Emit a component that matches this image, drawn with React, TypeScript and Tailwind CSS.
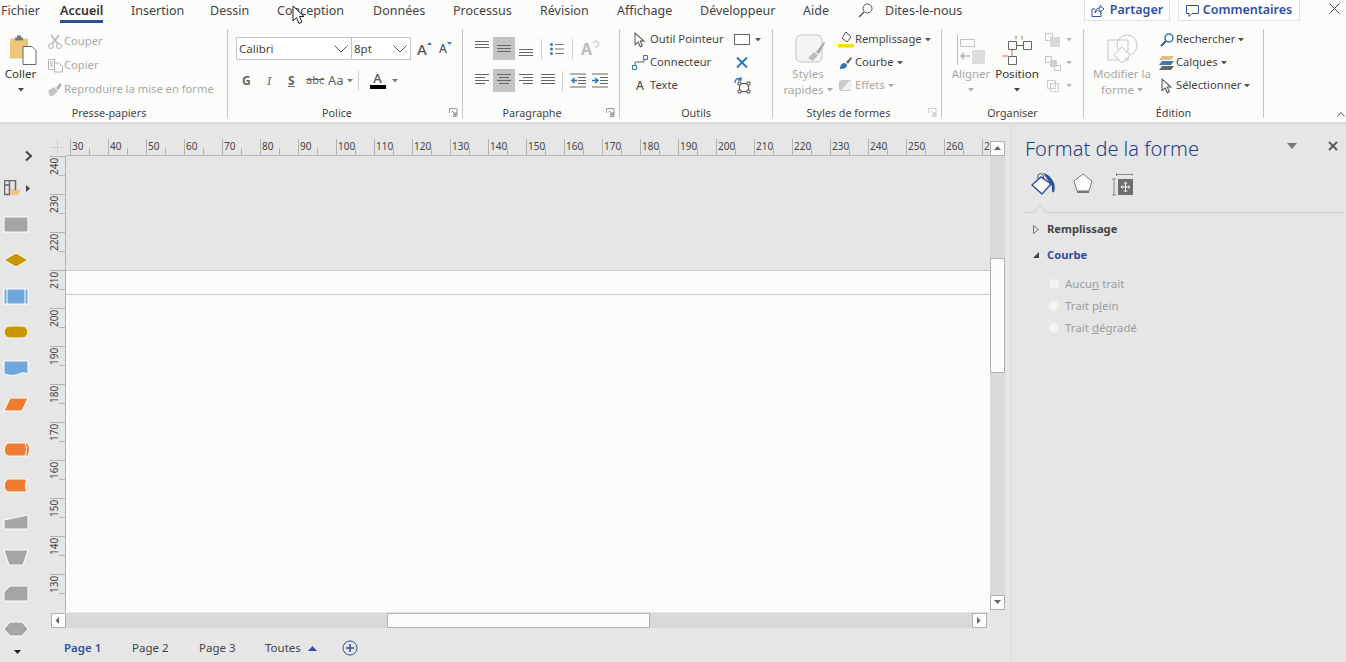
import type { ReactNode } from "react";

const font = { fontFamily: '"Noto Sans", "Open Sans", sans-serif' };

const tabs = [
  { name: "Fichier", w: "w-[59px]" },
  { name: "Accueil", w: "w-[71px]", active: true },
  { name: "Insertion", w: "w-[79px]" },
  { name: "Dessin", w: "w-[67px]" },
  { name: "Conception", w: "w-[96px]" },
  { name: "Données", w: "w-[80px]" },
  { name: "Processus", w: "w-[87px]" },
  { name: "Révision", w: "w-[77px]" },
  { name: "Affichage", w: "w-[83px]" },
  { name: "Développeur", w: "w-[103px]" },
  { name: "Aide", w: "w-[56px]" },
];

const hLabels = Array.from({ length: 25 }, (_, i) => 30 + i * 10);
const vLabels = Array.from({ length: 12 }, (_, i) => 240 - i * 10);

function Caret({ color = "#555" }: { color?: string }) {
  return (
    <svg width="6" height="3.500" viewBox="0 0 7 4" className="shrink-0">
      <path d="M0 0h7L3.500 4z" fill={color} />
    </svg>
  );
}

function Launcher({ off }: { off?: boolean }) {
  return (
    <svg width="9" height="9" viewBox="0 0 9 9" className="absolute bottom-[1px] right-[4px]">
      <path d="M.5 5V.5H8M8 .5V8.5H4" fill="none" stroke={off ? "#cfcfcf" : "#9a9a9a"} />
      <path d="M3 3l4 4M7 4v3H4" fill="none" stroke={off ? "#c4c4c4" : "#777"} />
    </svg>
  );
}

function Group({
  w,
  label,
  labelPad = "",
  launcher,
  launcherOff,
  children,
}: {
  w: string;
  label: string;
  labelPad?: string;
  launcher?: boolean;
  launcherOff?: boolean;
  children: ReactNode;
}) {
  return (
    <section className={`relative flex h-[89px] shrink-0 flex-col border-r border-[#c6c6c6] ${w}`}>
      <div className="flex h-[77px] shrink-0 items-start">{children}</div>
      <div className={`shrink-0 text-center text-[10.8px] leading-[13px] text-[#444] ${labelPad}`}>{label}</div>
      {launcher && <Launcher off={launcherOff} />}
    </section>
  );
}

function Row({
  icon,
  label,
  off,
  caret,
  h = "h-[23px]",
  iconW = "w-[18px]",
}: {
  icon: ReactNode;
  label: string;
  off?: boolean;
  caret?: boolean;
  h?: string;
  iconW?: string;
}) {
  return (
    <div className={`flex items-center whitespace-nowrap text-[11.2px] ${h} ${off ? "text-[#a8a8a8]" : "text-[#444]"}`}>
      <span className={`flex shrink-0 items-center justify-center ${iconW}`}>{icon}</span>
      <span>{label}</span>
      {caret && (
        <span className="ml-[3px]">
          <Caret color={off ? "#aaa" : "#555"} />
        </span>
      )}
    </div>
  );
}

function Big({
  icon,
  lines,
  off,
  w,
  caretInline,
}: {
  icon: ReactNode;
  lines: string[];
  off?: boolean;
  w: string;
  caretInline?: boolean;
}) {
  const tone = off ? "text-[#a8a8a8]" : "text-[#333]";
  return (
    <div className={`flex shrink-0 flex-col items-center pt-[4px] text-[11.5px] leading-[16px] ${w} ${tone}`}>
      <div className="flex h-[33px] items-center justify-center">{icon}</div>
      {lines.map((line, i) => (
        <div key={line} className="flex items-center gap-[3px] whitespace-nowrap">
          {line}
          {caretInline && i === lines.length - 1 && <Caret color="#aaa" />}
        </div>
      ))}
      {!caretInline && (
        <div className="flex h-[16px] items-center">
          <Caret color={off ? "#aaa" : "#444"} />
        </div>
      )}
    </div>
  );
}

function Lines({ kind, on }: { kind: string; on?: boolean }) {
  const rows: Record<string, string> = {
    top: "M0 1.5h14M0 4.5h14M0 7.5h14",
    mid: "M0 5.5h14M0 8.5h14M0 11.5h14",
    bot: "M0 9.5h14M0 12.5h14M0 15.5h14",
    left: "M0 2.5h14M0 5.5h10M0 8.5h14M0 11.5h10",
    center: "M0 2.5h14M2 5.5h10M0 8.5h14M2 11.5h10",
    right: "M0 2.5h14M4 5.5h10M0 8.5h14M4 11.5h10",
    just: "M0 2.5h14M0 5.5h14M0 8.5h14M0 11.5h14",
  };
  return (
    <span className={`flex h-[23px] w-[22px] items-center justify-center ${on ? "bg-[#c4c4c4]" : ""}`}>
      <svg width="14" height="17" viewBox="0 0 14 17">
        <path d={rows[kind]} stroke="#666" fill="none" />
      </svg>
    </span>
  );
}

function Sep({ h = "h-[20px]" }: { h?: string }) {
  return <span className={`block w-px shrink-0 bg-[#d0d0d0] ${h}`} />;
}

function Pointer({ size = 16 }: { size?: number }) {
  return (
    <svg width={size * 0.72} height={size} viewBox="0 0 11 15">
      <path d="M1 1v11l3-2.5 2 4.5 2-1-2-4.500h3.500z" fill="#fcfcfa" stroke="#555" />
    </svg>
  );
}

function Stencil({ children, className = "" }: { children: ReactNode; className?: string }) {
  return (
    <svg width="26" height="18" viewBox="0 0 26 18" className={`ml-[3px] shrink-0 ${className}`}>
      {children}
    </svg>
  );
}

function ScrollBtn({ d }: { d: string }) {
  return (
    <div className="flex h-[15px] w-[15px] shrink-0 items-center justify-center border border-[#b0b0b0] bg-[#fcfcfa]">
      <svg width="9" height="9" viewBox="0 0 9 9">
        <path d={d} fill="#666" />
      </svg>
    </div>
  );
}

export default function App() {
  return (
    <div className="relative h-[662px] w-[1346px] overflow-hidden bg-[#e6e6e6]" style={font}>
      {/* ribbon */}
      <header className="h-[125px] border-b-[3px] border-[#dcdcdc] bg-[#fcfcfa]">
        <nav className="flex h-[29px] items-start pl-[1px] text-[12.5px] text-[#444]">
          {tabs.map((tab) => (
            <div key={tab.name} className={`shrink-0 ${tab.w}`}>
              <span
                className={`inline-block h-[23px] pt-[2px] leading-[18px] ${
                  tab.active ? "border-b-[3px] border-[#2b4ea0] font-semibold text-[#333]" : ""
                }`}
              >
                {tab.name}
              </span>
            </div>
          ))}
          <div className="ml-[-1px] flex items-center pt-[3px]">
            <svg width="15" height="15" viewBox="0 0 15 15" className="mr-[12px]">
              <circle cx="9.500" cy="5.500" r="4.500" fill="none" stroke="#555" />
              <path d="M6 9l-5 5" stroke="#555" strokeWidth="1.400" />
            </svg>
            <span className="leading-[14px]">Dites-le-nous</span>
          </div>
          <div className="ml-auto flex items-start">
            <button className="flex h-[21px] w-[86px] items-center justify-center gap-[5px] border border-t-0 border-[#e2e2e2] bg-white pt-[1px] text-[12.5px] font-semibold text-[#2f4f9f]">
              <svg width="14" height="14" viewBox="0 0 14 14">
                <path d="M10 7v5.500H1V5h3" fill="none" stroke="#2f4f9f" />
                <path d="M4 9c0-3 2-5 5-5V1.500l4 3.500-4 3.500V6C7 6 5 7 4 9z" fill="none" stroke="#2f4f9f" />
              </svg>
              Partager
            </button>
            <button className="ml-[8px] flex h-[21px] w-[122px] items-center justify-center gap-[4px] border border-t-0 border-[#e2e2e2] bg-white pt-[1px] text-[12.5px] font-semibold text-[#2f4f9f]">
              <svg width="13" height="12" viewBox="0 0 13 12">
                <path d="M.5.500h12v8H6l-3 3v-3H.5z" fill="none" stroke="#2f4f9f" />
              </svg>
              Commentaires
            </button>
            <svg width="11" height="11" viewBox="0 0 11 11" className="ml-[29px] mr-[6px] mt-[3px]">
              <path d="M.5.500l10 10M10.500.5l-10 10" stroke="#444" />
            </svg>
          </div>
        </nav>

        <div className="flex">
          <Group w="w-[228px]" label="Presse-papiers" labelPad="pr-[9px]">
            <div className="flex w-[41px] shrink-0 flex-col items-center pt-[4px] text-[11.5px] leading-[16px] text-[#333]">
              <svg width="29" height="33" viewBox="0 0 29 30" className="ml-[5px]">
                <path d="M1 4h18v20H1z" fill="#eec67a" />
                <path d="M6 3h8v3H6z" fill="#777" />
                <path d="M8 1h4v3H8z" fill="#777" />
                <path d="M14 12h9l4 4v14H14z" fill="#fff" stroke="#666" />
              </svg>
              <span>Coller</span>
              <span className="flex h-[16px] items-center">
                <Caret color="#444" />
              </span>
            </div>
            <div className="ml-[5px] flex flex-col">
              <Row
                h="h-[24px]"
                off
                label="Couper"
                icon={
                  <svg width="15" height="15" viewBox="0 0 15 15">
                    <circle cx="3" cy="12" r="2.500" fill="none" stroke="#b5b5b5" />
                    <circle cx="11" cy="12" r="2.500" fill="none" stroke="#b5b5b5" />
                    <path d="M4 10L11 1M10 10L3 1" stroke="#b5b5b5" strokeWidth="1.500" />
                  </svg>
                }
              />
              <Row
                h="h-[24px]"
                off
                label="Copier"
                icon={
                  <svg width="15" height="15" viewBox="0 0 15 15">
                    <path d="M.5 1.500h6v10h-6zM6.500 5h4l4 3v6h-8z" fill="#fcfcfa" stroke="#b5b5b5" />
                    <path d="M2 4h3M2 6h3M2 8h3" stroke="#b5b5b5" />
                  </svg>
                }
              />
              <Row
                h="h-[24px]"
                off
                label="Reproduire la mise en forme"
                icon={
                  <svg width="16" height="15" viewBox="0 0 16 15">
                    <path d="M1 9l6-4 4 4-5 5H3z" fill="#c4c4c4" />
                    <path d="M9 6l4-5 2 2-4 5z" fill="#b0b0b0" />
                  </svg>
                }
              />
            </div>
          </Group>

          <Group w="w-[235px]" label="Police" labelPad="pr-[16px]" launcher>
            <div className="ml-[8px] flex flex-col">
              <div className="mt-[8px] flex h-[23px] items-center">
                <div className="flex h-[23px] w-[116px] items-center justify-between border border-[#c4c4c4] bg-white pl-[2px] pr-[3px] text-[11.500px] text-[#444]">
                  Calibri
                  <svg width="14" height="8" viewBox="0 0 14 8">
                    <path d="M.5.500L7 7l6.500-6.500" fill="none" stroke="#555" />
                  </svg>
                </div>
                <div className="ml-[-1px] flex h-[23px] w-[60px] items-center justify-between border border-[#c4c4c4] bg-white pl-[2px] pr-[3px] text-[11.500px] text-[#444]">
                  8pt
                  <svg width="14" height="8" viewBox="0 0 14 8">
                    <path d="M.5.500L7 7l6.500-6.500" fill="none" stroke="#555" />
                  </svg>
                </div>
                <span className="ml-[6px] flex w-[21px] items-start text-[15px] font-medium leading-[16px] text-[#555]">
                  A
                  <svg width="5" height="3" viewBox="0 0 5 3" className="mt-[1px]">
                    <path d="M0 3h5L2.500 0z" fill="#4a7ab5" />
                  </svg>
                </span>
                <span className="ml-[1px] flex items-start text-[12px] font-medium leading-[16px] text-[#555]">
                  A
                  <svg width="5" height="3" viewBox="0 0 5 3" className="mt-[1px]">
                    <path d="M0 0h5L2.500 3z" fill="#4a7ab5" />
                  </svg>
                </span>
              </div>
              <div className="mt-[9px] flex h-[23px] items-center text-[#666]">
                <span className="w-[23px] pl-[6px] text-[12px] font-bold">G</span>
                <span className="w-[22px] pl-[8px] font-serif text-[13px] italic">I</span>
                <span className="w-[22px] pl-[7px] text-[12px] font-bold underline">S</span>
                <span className="w-[23px] pl-[3px] text-[11px] line-through">abc</span>
                <span className="flex w-[32px] items-center gap-[3px] pl-[2px] text-[13px]">
                  Aa
                  <Caret color="#777" />
                </span>
                <Sep />
                <span className="ml-[7px] flex w-[23px] flex-col items-center text-[13px] font-medium leading-[13px] text-[#555]">
                  A
                  <span className="h-[4px] w-[16px] bg-black" />
                </span>
                <span className="ml-[3px]">
                  <Caret color="#777" />
                </span>
              </div>
            </div>
          </Group>

          <Group w="w-[157px]" label="Paragraphe" labelPad="pr-[18px]" launcher>
            <div className="ml-[8px] flex flex-col">
              <div className="mt-[8px] flex h-[23px] items-center">
                <Lines kind="top" />
                <Lines kind="mid" on />
                <Lines kind="bot" />
                <span className="ml-[4px]">
                  <Sep />
                </span>
                <svg width="14" height="14" viewBox="0 0 14 14" className="ml-[8px]">
                  <path d="M5 2.500h9M5 7h9M5 11.500h9" stroke="#777" />
                  <circle cx="1.500" cy="2.500" r="1.500" fill="#3f73b0" />
                  <circle cx="1.500" cy="7" r="1.500" fill="#3f73b0" />
                  <circle cx="1.500" cy="11.500" r="1.500" fill="#3f73b0" />
                </svg>
                <span className="ml-[8px]">
                  <Sep />
                </span>
                <span className="ml-[8px] flex items-start text-[16px] font-bold leading-[18px] text-[#bcbcbc]">
                  A
                  <svg width="7" height="8" viewBox="0 0 7 8">
                    <path d="M1 3a3 3 0 1 1 2 4" fill="none" stroke="#bcbcbc" />
                  </svg>
                </span>
              </div>
              <div className="mt-[9px] flex h-[23px] items-center">
                <Lines kind="left" />
                <Lines kind="center" on />
                <Lines kind="right" />
                <Lines kind="just" />
                <span className="ml-[3px]">
                  <Sep />
                </span>
                <svg width="16" height="15" viewBox="0 0 16 15" className="ml-[7px]">
                  <path d="M0 1h16M8 4.500h8M8 7.500h8M8 10.500h8M0 14h16" stroke="#666" />
                  <path d="M7 7.500H2M4.500 5L2 7.500 4.500 10" fill="none" stroke="#2e74b5" strokeWidth="1.500" />
                </svg>
                <svg width="16" height="15" viewBox="0 0 16 15" className="ml-[6px]">
                  <path d="M0 1h16M8 4.500h8M8 7.500h8M8 10.500h8M0 14h16" stroke="#666" />
                  <path d="M0 7.500h5M3 5l3 2.500L3 10" fill="none" stroke="#2e74b5" strokeWidth="1.500" />
                </svg>
              </div>
            </div>
          </Group>

          <Group w="w-[153px]" label="Outils">
            <div className="ml-[10px] mt-[-1px] flex w-[104px] shrink-0 flex-col">
              <Row iconW="w-[20px]" label="Outil Pointeur" icon={<Pointer />} />
              <Row
                iconW="w-[20px]"
                label="Connecteur"
                icon={
                  <svg width="16" height="15" viewBox="0 0 16 15">
                    <path d="M3 10V7h9V4" fill="none" stroke="#666" />
                    <path d="M.5 10.500h4v4h-4zM11.500.5h4v4h-4z" fill="#fff" stroke="#2e74b5" />
                  </svg>
                }
              />
              <Row
                iconW="w-[20px]"
                label="Texte"
                icon={<span className="text-[12px] font-medium text-[#555]">A</span>}
              />
            </div>
            <div className="mt-[-1px] flex flex-col">
              <div className="flex h-[23px] items-center gap-[5px]">
                <span className="h-[11px] w-[16px] border border-[#666] bg-white" />
                <Caret />
              </div>
              <div className="flex h-[23px] items-center pl-[2px]">
                <svg width="12" height="11" viewBox="0 0 12 11">
                  <path d="M1 .5l10 10M11 .5l-10 10" stroke="#2e74b5" strokeWidth="2" />
                </svg>
              </div>
              <div className="flex h-[23px] items-center">
                <svg width="17" height="17" viewBox="0 0 17 17">
                  <path d="M5.500 6.500h9v8h-9z" fill="none" stroke="#555" />
                  <path d="M4 5h3v3H4zM13 5h3v3h-3zM4 13h3v3H4zM13 13h3v3h-3z" fill="#fcfcfa" stroke="#555" />
                  <path d="M1 6a4 4 0 0 1 6-4M7 0v3H4" fill="none" stroke="#2e74b5" strokeWidth="1.300" />
                </svg>
              </div>
            </div>
          </Group>

          <Group w="w-[169px]" label="Styles de formes" labelPad="pr-[17px]" launcher launcherOff>
            <div className="ml-[13px]">
              <Big
                off
                caretInline
                w="w-[44px]"
                lines={["Styles", "rapides"]}
                icon={
                  <svg width="31" height="31" viewBox="0 0 31 31" className="ml-[5px]">
                    <rect x="1" y="1" width="26" height="27" rx="5" fill="#f4f4f4" stroke="#c4c4c4" />
                    <path d="M13 24l6-6 4 3-5 6z" fill="#bdbdbd" />
                    <path d="M21 18l8-10 1 1-6 11z" fill="#a8a8a8" />
                  </svg>
                }
              />
            </div>
            <div className="ml-[7px] mt-[-1px] flex flex-col">
              <Row
                caret
                label="Remplissage"
                icon={
                  <svg width="16" height="16" viewBox="0 0 16 16">
                    <path d="M8 0l5 5-4 5-5-4z" fill="#fff" stroke="#555" />
                    <path d="M0 12h16v3.500H0z" fill="#f2e100" />
                  </svg>
                }
              />
              <Row
                caret
                label="Courbe"
                icon={
                  <svg width="14" height="14" viewBox="0 0 14 14">
                    <path d="M1 13c0-4 2-6 5-6l2 2c0 3-3 4-7 4z" fill="#2e74b5" />
                    <path d="M7 6l5-5 1 1-4 6z" fill="#666" />
                  </svg>
                }
              />
              <Row
                off
                caret
                label="Effets"
                icon={
                  <svg width="16" height="13" viewBox="0 0 16 13">
                    <rect x="1" y="1" width="13" height="11" rx="3" fill="#c8c8c8" />
                    <path d="M3 11L11 2h3v9z" fill="#f0f0f0" />
                  </svg>
                }
              />
            </div>
          </Group>

          <Group w="w-[142px]" label="Organiser">
            <div className="ml-[9px]">
              <Big
                off
                w="w-[40px]"
                lines={["Aligner"]}
                icon={
                  <svg width="29" height="30" viewBox="0 0 29 30">
                    <path d="M.5 0v30" stroke="#bbb" />
                    <path d="M3.500 4.500h14v7h-14z" fill="none" stroke="#c0c0c0" />
                    <path d="M15 15h13v14H15z" fill="#dcdcdc" />
                    <path d="M13 21H4M7 18l-3 3 3 3" fill="none" stroke="#b5b5b5" strokeWidth="1.500" />
                  </svg>
                }
              />
            </div>
            <div className="ml-[4px]">
              <Big
                w="w-[44px]"
                lines={["Position"]}
                icon={
                  <svg width="30" height="30" viewBox="0 0 30 30">
                    <path d="M14 .5v4M20 .5v4M0 21h6" stroke="#d9684a" />
                    <path d="M10 14v7" stroke="#d9684a" />
                    <path d="M6.500 6.500h8v8h-8zM21.500 6.500h8v8h-8zM6.500 21.500h8v8h-8z" fill="none" stroke="#666" />
                    <path d="M14.500 10.500h7" stroke="#666" />
                  </svg>
                }
              />
            </div>
            <div className="ml-[6px] mt-[-1px] flex flex-col">
              {["a", "b", "c"].map((k) => (
                <div key={k} className="flex h-[23px] items-center gap-[5px]">
                  <svg width="16" height="16" viewBox="0 0 16 16">
                    {k === "a" && <path d="M.5 1.500h7v7h-7z" fill="none" stroke="#c4c4c4" />}
                    {k === "a" && <path d="M5 5h10v10H5z" fill="#d8d8d8" />}
                    {k === "b" && <path d="M.5 1.500h6v6h-6zM9.500 10.500h6v5h-6z" fill="none" stroke="#c4c4c4" />}
                    {k === "b" && <path d="M5 5h7v7H5z" fill="#d0d0d0" />}
                    {k === "c" && <path d="M2.500 2.500h8v8h-8zM5.500 5.500h8v8h-8z" fill="none" stroke="#bbb" strokeDasharray="2 1" />}
                  </svg>
                  <Caret color="#bbb" />
                </div>
              ))}
            </div>
          </Group>

          <Group w="w-[180px]" label="Édition">
            <div className="ml-[8px]">
              <Big
                off
                caretInline
                w="w-[60px]"
                lines={["Modifier la", "forme"]}
                icon={
                  <svg width="31" height="31" viewBox="0 0 31 31">
                    <path d="M1 6h20v20H1z" fill="none" stroke="#c4c4c4" />
                    <circle cx="20" cy="11" r="10" fill="none" stroke="#c4c4c4" />
                    <path d="M15 13l8 8-8 8-8-8z" fill="#fcfcfa" stroke="#c4c4c4" />
                  </svg>
                }
              />
            </div>
            <div className="ml-[5px] mt-[-1px] flex flex-col">
              <Row
                caret
                label="Rechercher"
                iconW="w-[19px]"
                icon={
                  <svg width="14" height="14" viewBox="0 0 14 14">
                    <circle cx="9" cy="5" r="4" fill="none" stroke="#2e74b5" strokeWidth="1.500" />
                    <path d="M6 8l-5 5" stroke="#2e5e95" strokeWidth="2" />
                  </svg>
                }
              />
              <Row
                caret
                label="Calques"
                iconW="w-[19px]"
                icon={
                  <svg width="15" height="14" viewBox="0 0 15 14">
                    <path d="M3 0h12l-3 4H0z" fill="#e3bd7c" />
                    <path d="M3 5h12l-3 4H0z" fill="#3b78b8" />
                    <path d="M3 10h12l-3 4H0z" fill="#666" />
                  </svg>
                }
              />
              <Row caret label="Sélectionner" iconW="w-[19px]" icon={<Pointer />} />
            </div>
          </Group>

          <div className="relative h-[89px] flex-1">
            <svg width="8" height="5" viewBox="0 0 8 5" className="absolute bottom-[1px] right-[1px]">
              <path d="M.5 4.500l3.500-4 3.500 4" fill="none" stroke="#555" />
            </svg>
          </div>
        </div>
      </header>

      {/* workspace */}
      <main className="flex h-[537px]">
        <aside className="flex w-[50px] shrink-0 flex-col">
          <svg width="8" height="10" viewBox="0 0 8 10" className="ml-[25px] mt-[26px]">
            <path d="M1 .5L6 5 1 9.500" fill="none" stroke="#444" strokeWidth="2" />
          </svg>
          <div className="ml-[4px] mt-[19px] flex items-center">
            <svg width="17" height="16" viewBox="0 0 17 16">
              <path d="M.5.500h11v10h-6v4h-5zM.5 5h5v5M5.500.5V5" fill="none" stroke="#666" strokeWidth="1.500" />
              <path d="M6 9h4l1 1h5l-2 5H6z" fill="#efc47d" />
            </svg>
            <svg width="4" height="7" viewBox="0 0 4 7" className="ml-[5px]">
              <path d="M0 0l4 3.500L0 7z" fill="#444" />
            </svg>
          </div>
          <div className="mt-[20px] flex flex-col">
            <Stencil>
              <rect x="1" y="1" width="24" height="15" fill="#a5a5a5" stroke="#fff" />
            </Stencil>
            <Stencil className="mt-[18px]">
              <path d="M13 1l12 7-12 7L1 8z" fill="#c99700" stroke="#fff" />
            </Stencil>
            <Stencil className="mt-[18px]">
              <rect x="1" y="1" width="24" height="15" fill="#70a6dc" stroke="#fff" />
              <path d="M4 1v15M22 1v15" stroke="#fff" />
            </Stencil>
            <Stencil className="mt-[18px]">
              <rect x="1" y="2" width="24" height="12" rx="6" fill="#c99700" stroke="#fff" />
            </Stencil>
            <Stencil className="mt-[18px]">
              <path d="M1 1h24v13c-5-3-8 0-12 1-4 1-8 0-12-1z" fill="#70a6dc" stroke="#fff" />
            </Stencil>
            <Stencil className="mt-[18px]">
              <path d="M7 2h18l-6 13H1z" fill="#ed7d31" stroke="#fff" />
            </Stencil>
            <Stencil className="mt-[27px]">
              <path d="M5 2h20c2 4 2 9 0 13H5C0 13 0 5 5 2z" fill="#ed7d31" stroke="#fff" />
              <path d="M22 2c2 4 2 9 0 13" fill="none" stroke="#fff" />
            </Stencil>
            <Stencil className="mt-[18px]">
              <path d="M5 2h19c-2 4-2 9 0 13H5C0 13 0 5 5 2z" fill="#ed7d31" stroke="#fff" />
            </Stencil>
            <Stencil className="mt-[18px]">
              <path d="M1 7l24-5v14H1z" fill="#a5a5a5" stroke="#fff" />
            </Stencil>
            <Stencil className="mt-[18px]">
              <path d="M1 1h24l-5 15H6z" fill="#a5a5a5" stroke="#fff" />
            </Stencil>
            <Stencil className="mt-[18px]">
              <path d="M7 1h18v15H1V7z" fill="#a5a5a5" stroke="#fff" />
            </Stencil>
            <Stencil className="mt-[18px]">
              <path d="M7 1h12l6 7-6 7H7L1 8z" fill="#a5a5a5" stroke="#fff" />
            </Stencil>
          </div>
          <svg width="7" height="4" viewBox="0 0 7 4" className="ml-[14px] mt-[11px]">
            <path d="M0 0h7L3.500 4z" fill="#222" />
          </svg>
        </aside>

        <div className="flex w-[961px] shrink-0 flex-col">
          <div className="flex">
            <div className="w-[940px] shrink-0">
              <div className="flex h-[31px] items-end">
                <svg width="16" height="16" viewBox="0 0 16 16" className="mb-[1px] shrink-0">
                  <path d="M7.500 1v14M0 8.500h14" stroke="#d0d0d0" />
                </svg>
                <div className="flex h-[17px] w-[924px] overflow-hidden border-b border-[#b4b4b4] pl-[4px]">
                  {hLabels.map((n) => (
                    <div
                      key={n}
                      className="relative h-[16px] w-[38px] shrink-0 border-l border-[#b4b4b4] pl-[1px] text-[10px] leading-[14px] text-[#444]"
                    >
                      {n}
                      <span className="absolute bottom-0 left-[18px] h-[7px] w-px bg-[#b4b4b4]" />
                    </div>
                  ))}
                </div>
              </div>
              <div className="flex h-[456px]">
                <div className="w-[16px] shrink-0 border-r border-[#b4b4b4]">
                  {vLabels.map((n) => (
                    <div key={n} className="relative h-[38px] border-t border-[#b4b4b4]">
                      <span
                        className="absolute left-[0px] top-[0px] h-[18px] w-[9px] text-[10px] leading-[9px] text-[#444]"
                        style={{ writingMode: "vertical-rl", transform: "rotate(180deg)" }}
                      >
                        {n}
                      </span>
                      <span className="absolute right-0 top-[18px] h-px w-[6px] bg-[#b4b4b4]" />
                    </div>
                  ))}
                </div>
                <div className="flex w-[924px] flex-col bg-[#fcfcfa]">
                  <div className="h-[114px] bg-[#e6e6e6]" />
                  <div className="h-[25px] border-y border-[#c8c8c8]" />
                </div>
              </div>
            </div>
            <div className="mt-[16px] flex h-[469px] w-[15px] shrink-0 flex-col bg-[#d9d9d9]">
              <ScrollBtn d="M1 6l3.500-4L8 6z" />
              <div className="h-[102px]" />
              <div className="h-[115px] border border-[#b0b0b0] bg-[#fcfcfa]" />
              <div className="flex-1" />
              <ScrollBtn d="M1 2h7L4.500 6z" />
            </div>
          </div>

          <div className="ml-[1px] mt-[1px] flex h-[15px] w-[936px] bg-[#d9d9d9]">
            <ScrollBtn d="M5 1v7L1.500 4.500z" />
            <div className="w-[321px]" />
            <div className="w-[263px] border border-[#b0b0b0] bg-[#fcfcfa]" />
            <div className="flex-1" />
            <ScrollBtn d="M2 1v7l3.500-3.500z" />
          </div>

          <div className="flex h-[34px] items-center pl-[14px] pt-[6px] text-[11.500px] text-[#444]">
            <span className="w-[68px] font-semibold text-[#2f4f9f]">Page 1</span>
            <span className="w-[67px]">Page 2</span>
            <span className="w-[66px]">Page 3</span>
            <span className="flex w-[77px] items-center gap-[7px]">
              Toutes
              <svg width="9" height="5" viewBox="0 0 9 5">
                <path d="M0 5h9L4.500 0z" fill="#2f4f9f" />
              </svg>
            </span>
            <svg width="16" height="16" viewBox="0 0 16 16">
              <circle cx="8" cy="8" r="7" fill="none" stroke="#2f4f9f" />
              <path d="M8 4v8M4 8h8" stroke="#2f4f9f" strokeWidth="1.500" />
            </svg>
          </div>
        </div>

        {/* format pane */}
        <aside className="w-[335px] shrink-0 border-l border-[#dadada] pl-[13px] pr-[2px] pt-[9px]">
          <div className="flex h-[30px] items-center">
            <h1 className="text-[20px] font-light leading-[30px] text-[#1f3f85]">Format de la forme</h1>
            <svg width="10" height="6" viewBox="0 0 10 6" className="ml-auto mb-[7px]">
              <path d="M0 0h10L5 6z" fill="#777" />
            </svg>
            <svg width="10" height="10" viewBox="0 0 10 10" className="mb-[7px] ml-[31px] mr-[6px]">
              <path d="M1 1l8 8M9 1l-8 8" stroke="#555" strokeWidth="1.800" />
            </svg>
          </div>
          <div className="mt-[7px] flex h-[26px] items-center pl-[6px]">
            <svg width="25" height="24" viewBox="0 0 25 24">
              <path d="M10 5l-9 8 10 9 9-10z" fill="#fff" stroke="#2f4f9f" strokeWidth="1.500" />
              <path d="M7 7V3a3 3 0 0 1 5 0l1 4" fill="none" stroke="#555" />
              <path d="M12 1c5 1 9 5 11 10 1 3 1 6 0 9-1 1-2 0-2-2 0-3 0-5-2-7z" fill="#2f4f9f" />
            </svg>
            <svg width="22" height="24" viewBox="0 0 22 24" className="ml-[16px]">
              <path d="M11 2l9 7-3 10H5L2 9z" fill="#fcfcfa" stroke="#777" />
              <path d="M5 20h12" stroke="#777" strokeWidth="2" />
            </svg>
            <svg width="22" height="24" viewBox="0 0 22 24" className="ml-[17px]">
              <path d="M5 2.500h17M5.500 1v3M22 1v3M1 7h4M1 23h4M3 7v16" fill="none" stroke="#888" />
              <path d="M7 7h15v16H7z" fill="#6e6e6e" />
              <path d="M14.500 10v10M10 15h9M13 11.500l1.500-1.500 1.500 1.500M13 18.500l1.500 1.500 1.500-1.500M11.500 13.500L10 15l1.500 1.500M17.500 13.500L19 15l-1.500 1.500" fill="none" stroke="#fff" />
            </svg>
          </div>
          <svg width="319" height="9" viewBox="0 0 319 9" className="mt-[7px] block">
            <path d="M0 8.500h9l6-7 6 7h298" fill="none" stroke="#c8c8c8" />
          </svg>
          <div className="mt-[6px] flex h-[20px] items-center text-[11.200px] font-bold text-[#444]">
            <svg width="6" height="9" viewBox="0 0 6 9" className="ml-[8px] mr-[8px]">
              <path d="M.5.500l5 4-5 4z" fill="none" stroke="#777" />
            </svg>
            Remplissage
          </div>
          <div className="mt-[6px] flex h-[20px] items-center text-[11.200px] font-bold text-[#2f4f9f]">
            <svg width="6" height="6" viewBox="0 0 6 6" className="ml-[8px] mr-[8px]">
              <path d="M6 0v6H0z" fill="#444" />
            </svg>
            Courbe
          </div>
          <div className="mt-[8px] flex flex-col pl-[24px] text-[11.500px] text-[#9c9c9c]">
            {[
              { key: "a", text: <>Aucu<u>n</u> trait</> },
              { key: "b", text: <>Trait p<u>l</u>ein</> },
              { key: "c", text: <>Trait <u>d</u>égradé</> },
            ].map((item) => (
              <div key={item.key} className="flex h-[22px] items-center gap-[6px]">
                <span className="h-[10px] w-[10px] rounded-full bg-[#f3f3f3]" />
                <span>{item.text}</span>
              </div>
            ))}
          </div>
        </aside>
      </main>

      {/* mouse cursor */}
      <svg width="13" height="20" viewBox="0 0 13 20" className="absolute left-[292px] top-[5px]">
        <path d="M1 1v15l3.500-3.500 2.500 6 3-1.500-2.500-5.500H12z" fill="#fff" stroke="#222" />
      </svg>
    </div>
  );
}
